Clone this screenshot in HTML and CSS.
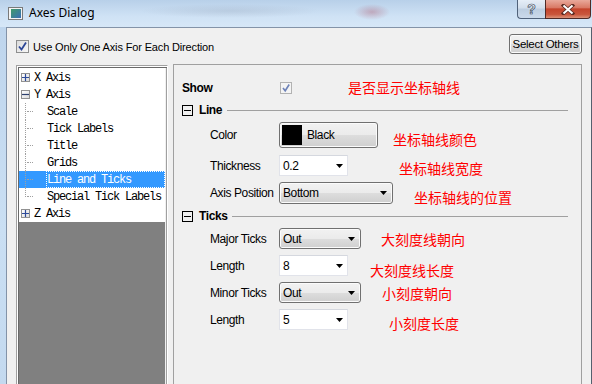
FILE: index.html
```html
<!DOCTYPE html>
<html lang="en">
<head>
  <meta charset="UTF-8">
  <title>Axes Dialog</title>
  <link rel="stylesheet" href="styles.css">
</head>
<body>
  <div class="window">
    <div class="titlebar">
      <svg class="app-icon" viewBox="0 0 15 13" width="15" height="13">
        <defs>
          <linearGradient id="ic" x1="0" y1="0" x2="1" y2="1">
            <stop offset="0" stop-color="#3f9a6a"/>
            <stop offset="1" stop-color="#3a6fb8"/>
          </linearGradient>
        </defs>
        <rect x="0.5" y="0.5" width="14" height="12" fill="#f4f4f4" stroke="#7a7a7a"/>
        <rect x="3" y="2" width="10" height="9" fill="url(#ic)"/>
      </svg>
      <span class="title">Axes Dialog</span>
      <div class="caption">
        <div class="cap-btn cap-help">?</div>
        <div class="cap-btn cap-close">
          <svg width="14" height="11" viewBox="0 0 14 11">
            <path d="M2.5 1.5 L11.5 9.5 M11.5 1.5 L2.5 9.5" stroke="#5b2b22" stroke-width="3.6" stroke-linecap="square"/>
            <path d="M2.5 1.5 L11.5 9.5 M11.5 1.5 L2.5 9.5" stroke="#fff" stroke-width="2"/>
          </svg>
        </div>
      </div>
    </div>

    <div class="client">
      <div class="topbar">
        <label class="check">
          <span class="checkbox">
            <svg width="11" height="11" viewBox="0 0 11 11"><path d="M2 5.5 L4.5 8.5 L9 1.5" stroke="#2b4596" stroke-width="1.8" fill="none"/></svg>
          </span>
          Use Only One Axis For Each Direction
        </label>
        <div class="btn select-btn">Select Others</div>
      </div>

      <div class="main">
        <div class="tree-box">
          <div class="tree">
            <div class="tree-row">
              <span class="expander"><svg width="7" height="7" viewBox="0 0 7 7"><path d="M0 3.5 H7 M3.5 0 V7" stroke="#2d4b9a" stroke-width="1.2"/></svg></span>
              <span>X Axis</span>
            </div>
            <div class="tree-row">
              <span class="expander"><svg width="7" height="7" viewBox="0 0 7 7"><path d="M0 3.5 H7" stroke="#2d3f6e" stroke-width="1.2"/></svg></span>
              <span>Y Axis</span>
            </div>
            <div class="tree-children">
              <div class="tree-row child"><span class="item">Scale</span></div>
              <div class="tree-row child"><span class="item">Tick Labels</span></div>
              <div class="tree-row child"><span class="item">Title</span></div>
              <div class="tree-row child"><span class="item">Grids</span></div>
              <div class="tree-row child selected"><span class="item">Line and Ticks</span></div>
              <div class="tree-row child"><span class="item">Special Tick Labels</span></div>
            </div>
            <div class="tree-row">
              <span class="expander"><svg width="7" height="7" viewBox="0 0 7 7"><path d="M0 3.5 H7 M3.5 0 V7" stroke="#2d4b9a" stroke-width="1.2"/></svg></span>
              <span>Z Axis</span>
            </div>
          </div>
          <div class="tree-empty"></div>
        </div>

        <div class="panel">
          <div class="row row-show">
            <span class="label label-show">Show</span>
            <span class="checkbox checkbox-dim">
              <svg width="10" height="10" viewBox="0 0 10 10"><path d="M2 5 L4.2 7.8 L8.2 1.5" stroke="#6d82b8" stroke-width="1.6" fill="none"/></svg>
            </span>
            <span class="note note-show">是否显示坐标轴线</span>
          </div>

          <div class="section-head">
            <span class="toggle"></span>
            <span class="section-title">Line</span>
            <span class="rule"></span>
          </div>

          <div class="row row-color">
            <span class="label">Color</span>
            <div class="btn color-btn"><span class="swatch"></span>Black</div>
            <span class="note note-color">坐标轴线颜色</span>
          </div>

          <div class="row row-thick">
            <span class="label">Thickness</span>
            <div class="combo-edit">0.2<svg class="arrow" width="7" height="4" viewBox="0 0 7 4"><path d="M0 0 H7 L3.5 4 Z"/></svg></div>
            <span class="note note-width">坐标轴线宽度</span>
          </div>

          <div class="row row-axis">
            <span class="label">Axis Position</span>
            <div class="btn combo-btn combo-wide">Bottom<svg class="arrow" width="7" height="4" viewBox="0 0 7 4"><path d="M0 0 H7 L3.5 4 Z"/></svg></div>
            <span class="note note-pos">坐标轴线的位置</span>
          </div>

          <div class="section-head section-ticks">
            <span class="toggle"></span>
            <span class="section-title">Ticks</span>
            <span class="rule"></span>
          </div>

          <div class="row row-major">
            <span class="label">Major Ticks</span>
            <div class="btn combo-btn">Out<svg class="arrow" width="7" height="4" viewBox="0 0 7 4"><path d="M0 0 H7 L3.5 4 Z"/></svg></div>
            <span class="note note-major">大刻度线朝向</span>
          </div>

          <div class="row">
            <span class="label">Length</span>
            <div class="combo-edit">8<svg class="arrow" width="7" height="4" viewBox="0 0 7 4"><path d="M0 0 H7 L3.5 4 Z"/></svg></div>
            <span class="note note-len">大刻度线长度</span>
          </div>

          <div class="row">
            <span class="label">Minor Ticks</span>
            <div class="btn combo-btn">Out<svg class="arrow" width="7" height="4" viewBox="0 0 7 4"><path d="M0 0 H7 L3.5 4 Z"/></svg></div>
            <span class="note note-minor">小刻度朝向</span>
          </div>

          <div class="row">
            <span class="label">Length</span>
            <div class="combo-edit">5<svg class="arrow" width="7" height="4" viewBox="0 0 7 4"><path d="M0 0 H7 L3.5 4 Z"/></svg></div>
            <span class="note note-minlen">小刻度长度</span>
          </div>
        </div>
      </div>
    </div>
  </div>
</body>
</html>
```

FILE: styles.css
```css
html,body{
  margin: 0;
  padding: 0;
}
body{
  width: 592px;
  height: 384px;
  overflow: hidden;
  background: #c6dbf0;
  font-family: "Liberation Sans", Arial, sans-serif;
  font-size: 12px;
  color: #000;
}
.window{
  display: flex;
  flex-direction: column;
  height: 384px;
  background: linear-gradient(to bottom, #bdd4ec, #cadff3 60%, #c3d9ef);
}

/* title bar */
.titlebar{
  height: 27px;
  flex: none;
  display: flex;
  align-items: flex-start;
  background:
    radial-gradient(ellipse 18px 8px at 372px 12px, rgba(170,70,90,.35), transparent),
    radial-gradient(ellipse 90px 7px at 230px 11px, rgba(120,130,150,.18), transparent),
    linear-gradient(to bottom, #b8d0e9, #cfe2f5 60%, #d6e7f7);
}
.app-icon{
  margin: 7px 0 0 8px;
}
.title{
  margin: 4px 0 0 6px;
  font-family: "Noto Sans", sans-serif;
  font-size: 12px;
  line-height: 18px;
}
.caption{
  margin-left: auto;
  display: flex;
  margin-right: 1px;
}
.cap-btn{
  height: 19px;
  box-sizing: border-box;
  border: 1px solid #50627a;
  border-top: none;
  display: flex;
  align-items: center;
  justify-content: center;
}
.cap-help{
  width: 28px;
  border-right: none;
  border-radius: 0 0 0 4px;
  background: linear-gradient(to bottom, #e6eef7, #d2deeb 45%, #bccde0 50%, #cbdaeb);
  font-weight: bold;
  font-size: 14px;
  color: #f6f8fb;
  -webkit-text-stroke: 0.7px #3b4b5f;
}
.cap-close{
  width: 46px;
  border-color: #4f2a26;
  border-radius: 0 0 4px 0;
  background: linear-gradient(to bottom, #e9a99b, #d97a66 42%, #c4442c 50%, #c9563c 80%, #dc9278);
}

/* client area */
.client{
  flex: 1;
  min-height: 0;
  margin-left: 6px;
  border-top: 1px solid #8393a8;
  border-left: 1px solid #8393a8;
  border-right: 1px solid #55606e;
  background: #f0f0f0;
  padding: 6px 9px 0;
  display: flex;
  flex-direction: column;
}
.topbar{
  height: 20px;
  flex: none;
  display: flex;
  align-items: center;
}
.check{
  display: flex;
  align-items: center;
  margin-top: 5px;
  font-size: 11px;
  letter-spacing: -0.15px;
}
.checkbox{
  width: 13px;
  height: 13px;
  box-sizing: border-box;
  border: 1px solid #8e8f8f;
  background: linear-gradient(135deg, #dcdcdc, #f7f7f7);
  display: flex;
  align-items: center;
  justify-content: center;
  margin-right: 4px;
}
.checkbox-dim{
  width: 12px;
  height: 12px;
  border-color: #b2b2b2;
  background: #f4f4f4;
  margin-right: 0;
}
.btn{
  box-sizing: border-box;
  border: 1px solid #707070;
  border-radius: 3px;
  background: linear-gradient(to bottom, #f2f2f2 0%, #ebebeb 50%, #dddddd 51%, #cfcfcf 100%);
  box-shadow: inset 0 0 0 1px #fbfbfb;
  display: flex;
  align-items: center;
}
.select-btn{
  margin-left: auto;
  width: 73px;
  height: 20px;
  justify-content: center;
  font-size: 11.5px;
  letter-spacing: -0.3px;
}

.main{
  flex: 1;
  min-height: 0;
  display: flex;
  gap: 5px;
  margin-top: 10px;
}

/* tree */
.tree-box{
  width: 152px;
  margin-top: 1px;
  box-sizing: border-box;
  border: 1px solid #a0a0a0;
  border-right-color: #fff;
  border-bottom: none;
  display: flex;
  flex-direction: column;
  box-shadow: inset 1px 1px 0 #fff, inset 2px 2px 0 #696969, inset -1px 0 0 #a0a0a0;
  padding: 2px 2px 0 2px;
}
.tree{
  background: #fff;
  padding-top: 1px;
  font-family: "Liberation Mono", monospace;
  font-size: 12px;
  letter-spacing: -1.2px;
}
.tree-row{
  height: 17px;
  display: flex;
  align-items: center;
  position: relative;
}
.expander{
  width: 9px;
  height: 9px;
  box-sizing: border-box;
  border: 1px solid #919191;
  background: linear-gradient(135deg, #fff, #dcdcdc);
  margin: 0 4px 0 2px;
  display: flex;
  align-items: center;
  justify-content: center;
}
.expander svg{
  display: block;
}
.child{
  padding-left: 27px;
}
.child::before{
  content: "";
  position: absolute;
  left: 6px;
  top: 0;
  bottom: 0;
  border-left: 1px dotted #a0a0a0;
}
.child:last-child::before{
  bottom: 8px;
}
.child::after{
  content: "";
  position: absolute;
  left: 8px;
  top: 8px;
  width: 6px;
  border-top: 1px dotted #a0a0a0;
}
.item{
  flex: 1;
  align-self: stretch;
  display: flex;
  align-items: center;
  box-sizing: border-box;
  border: 1px dotted transparent;
}
.selected{
  background: #3399ff;
  color: #fff;
}
.selected .item{
  border-color: #fff;
}
.tree-empty{
  flex: 1;
  background: #808080;
}

/* right panel */
.panel{
  flex: 1;
  border: 1px solid #a0a0a0;
  border-bottom: none;
  padding: 0 8px;
  letter-spacing: -0.4px;
}
.row{
  height: 21px;
  margin-top: 6px;
  padding-left: 28px;
  display: flex;
  align-items: center;
}
.label{
  width: 69px;
  flex: none;
}
.row-show{
  height: 22px;
  margin-top: 12px;
  padding-left: 0;
}
.label-show{
  width: 98px;
  font-weight: bold;
}
.row-color{
  height: 26px;
  margin-top: 4px;
}
.row-thick{
  margin-top: 7px;
}
.row-axis{
  height: 22px;
}
.row-major{
  margin-top: 4px;
}
.section-head{
  height: 16px;
  margin-top: 3px;
  display: flex;
  align-items: center;
}
.section-ticks{
  margin-top: 4px;
}
.toggle{
  width: 11px;
  height: 11px;
  box-sizing: border-box;
  border: 1px solid #000;
  display: flex;
  align-items: center;
  justify-content: center;
}
.toggle::before{
  content: "";
  width: 7px;
  height: 1px;
  background: #000;
}
.section-title{
  font-weight: bold;
  margin-left: 6px;
}
.rule{
  flex: 1;
  height: 1px;
  background: #a0a0a0;
  margin: 0 5px 0 5px;
}

.color-btn{
  width: 99px;
  height: 26px;
  padding-left: 2px;
}
.swatch{
  width: 20px;
  height: 20px;
  background: #000;
  margin-right: 5px;
}
.combo-edit{
  width: 69px;
  height: 21px;
  box-sizing: border-box;
  border: 1px solid #e1e3ea;
  border-top-color: #d5d8df;
  background: #fff;
  padding-left: 3px;
  display: flex;
  align-items: center;
}
.arrow{
  margin-left: auto;
  margin-right: 4px;
  flex: none;
}
.combo-btn{
  width: 82px;
  height: 21px;
  padding-left: 3px;
}
.combo-btn .arrow{
  margin-right: 5px;
}
.combo-wide{
  width: 114px;
  height: 22px;
}

.note{
  font-family: "Noto Sans CJK SC", sans-serif;
  font-size: 14px;
  color: #ff0000;
  letter-spacing: 0;
  white-space: nowrap;
}
.note-show{
  margin-left: 56px;
  margin-bottom: 2px;
}
.note-color{
  margin-left: 15px;
  margin-top: 8px;
}
.note-width{
  margin-left: 51px;
  margin-top: 5px;
}
.note-pos{
  margin-left: 21px;
  margin-top: 8px;
}
.note-major{
  margin-left: 20px;
}
.note-len{
  margin-left: 22px;
  margin-top: 8px;
}
.note-minor{
  margin-left: 21px;
}
.note-minlen{
  margin-left: 41px;
  margin-top: 7px;
}
```
